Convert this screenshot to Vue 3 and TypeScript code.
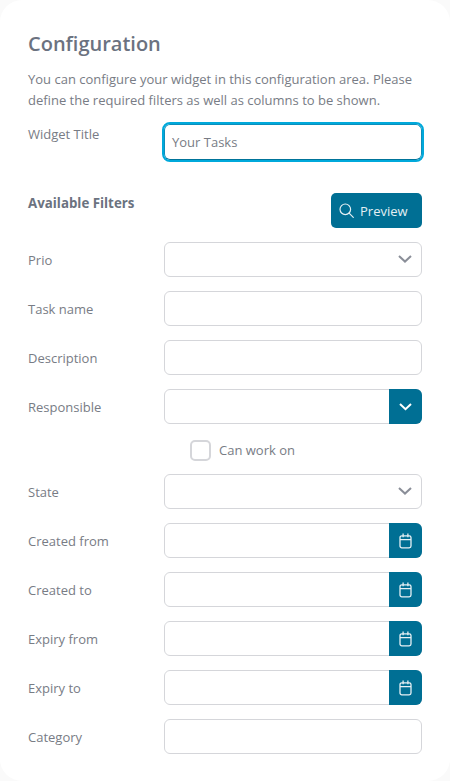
<script setup lang="ts">
type Kind = 'text' | 'select' | 'lookup' | 'date'
interface Row { label: string; kind: Kind }
const before: Row[] = [
  { label: 'Prio', kind: 'select' },
  { label: 'Task name', kind: 'text' },
  { label: 'Description', kind: 'text' },
  { label: 'Responsible', kind: 'lookup' },
]
const after: Row[] = [
  { label: 'State', kind: 'select' },
  { label: 'Created from', kind: 'date' },
  { label: 'Created to', kind: 'date' },
  { label: 'Expiry from', kind: 'date' },
  { label: 'Expiry to', kind: 'date' },
  { label: 'Category', kind: 'text' },
]
</script>

<template>
  <main class="card">
    <h1>Configuration</h1>
    <p class="intro">You can configure your widget in this configuration area. Please define the required filters as well as columns to be shown.</p>
    <div class="title-row">
      <label>Widget Title</label>
      <div class="title-input">Your Tasks</div>
    </div>
    <div class="filters-head">
      <h2>Available Filters</h2>
      <button class="preview">
        <svg width="15" height="15" viewBox="0 0 15 15" fill="none" stroke="currentColor" stroke-width="1.2" stroke-linecap="round"><circle cx="6.3" cy="6.3" r="5.3" /><path d="M10.1 10.1 14.3 14.3" /></svg>
        Preview
      </button>
    </div>
    <div class="rows">
      <div v-for="r in before" :key="r.label" class="row">
        <label>{{ r.label }}</label>
        <div class="field">
          <svg v-if="r.kind === 'select'" class="chev" width="14" height="8" viewBox="0 0 14 8" fill="none" stroke="#8a8e98" stroke-width="2"><path d="M1 1l6 5.6L13 1" /></svg>
          <span v-if="r.kind === 'lookup'" class="addon">
            <svg width="13" height="8" viewBox="0 0 13 8" fill="none" stroke="#fff" stroke-width="2"><path d="M1 1l5.5 5.2L12 1" /></svg>
          </span>
        </div>
      </div>
      <div class="check-row">
        <span class="box"></span>
        <span>Can work on</span>
      </div>
      <div v-for="r in after" :key="r.label" class="row">
        <label>{{ r.label }}</label>
        <div class="field">
          <svg v-if="r.kind === 'select'" class="chev" width="14" height="8" viewBox="0 0 14 8" fill="none" stroke="#8a8e98" stroke-width="2"><path d="M1 1l6 5.6L13 1" /></svg>
          <span v-if="r.kind === 'date'" class="addon">
            <svg width="13" height="16" viewBox="0 0 13 16" fill="none" stroke="#e6f0f4" stroke-width="1.3"><rect x="1" y="2.8" width="11" height="12" rx="1.8" /><path d="M1 6.6h11M4.1.6v3.6M8.9.6v3.6" /></svg>
          </span>
        </div>
      </div>
    </div>
  </main>
</template>

<style scoped>
.card {
  box-sizing: border-box;
  width: 450px;
  height: 781px;
  padding: 32px 28px 0;
  background: #fff;
  border-radius: 22px;
  color: #787c85;
  font-family: "Open Sans", sans-serif;
  font-size: 13px;
  overflow: hidden;
}
h1 {
  margin: 0;
  font-size: 20px;
  line-height: 24px;
  font-weight: 600;
  color: #6b7280;
}
.intro {
  margin: 13px 0 0;
  line-height: 21px;
  font-size: 13px;
}
.title-row {
  display: flex;
  margin-top: 9px;
}
.title-row label {
  width: 136px;
  flex: none;
  line-height: 20px;
  padding-top: 4px;
}
.title-input {
  box-sizing: border-box;
  width: 258px;
  height: 36px;
  margin-top: 4px;
  padding-left: 7px;
  display: flex;
  align-items: center;
  border: 1px solid #0a8fbc;
  border-bottom-color: #00749a;
  outline: 2px solid #00a9db;
  border-radius: 6px;
}
.filters-head {
  display: flex;
  justify-content: space-between;
  align-items: flex-start;
  margin-top: 33px;
}
h2 {
  margin: 0;
  font-size: 13.3px;
  line-height: 20px;
  font-weight: 700;
  color: #6b7280;
}
.preview {
  display: flex;
  align-items: center;
  gap: 6px;
  box-sizing: border-box;
  width: 91px;
  height: 35px;
  padding: 0 0 0 8px;
  border: 0;
  border-radius: 5px;
  background: #006f94;
  color: #e4eff3;
  font: inherit;
}
.rows {
  display: flex;
  flex-direction: column;
  gap: 14px;
  margin-top: 14px;
}
.row {
  display: flex;
  align-items: center;
  height: 35px;
}
.row label {
  width: 136px;
  flex: none;
}
.field {
  position: relative;
  box-sizing: border-box;
  width: 258px;
  height: 35px;
  border: 1px solid #d5d6da;
  border-radius: 6px;
  background: #fff;
}
.chev {
  position: absolute;
  right: 9px;
  top: 12px;
}
.addon {
  position: absolute;
  right: -1px;
  top: -1px;
  bottom: -1px;
  width: 33px;
  display: flex;
  align-items: center;
  justify-content: center;
  background: #006f94;
  border-radius: 0 6px 6px 0;
}
.check-row {
  display: flex;
  align-items: center;
  gap: 8px;
  height: 22px;
  margin: 1px 0 -1px 162px;
}
.box {
  box-sizing: border-box;
  width: 21px;
  height: 21px;
  border: 2px solid #d5d6da;
  border-radius: 5px;
}
</style>

<style>
html, body { background: #fafafa; }
</style>
